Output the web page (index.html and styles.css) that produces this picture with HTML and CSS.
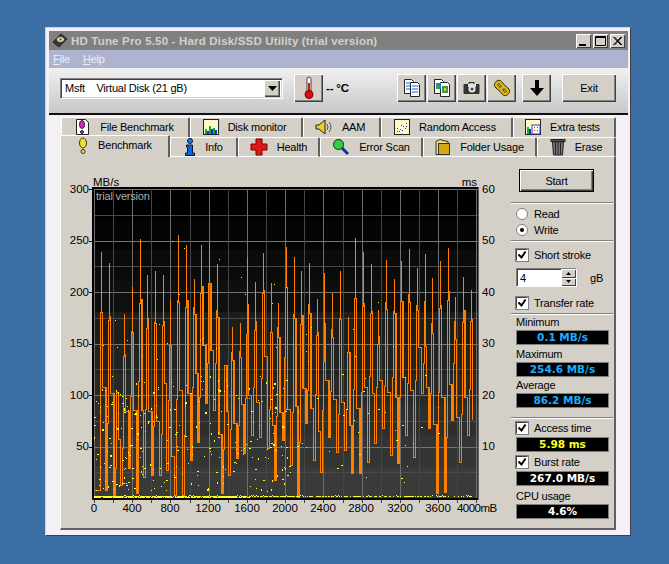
FILE: index.html
```html
<!DOCTYPE html>
<html lang="en">
<head>
<meta charset="utf-8">
<title>HD Tune Pro 5.50</title>
<link rel="stylesheet" href="styles.css">
</head>
<body>
<div class="win">
  <div class="titlebar">
    <svg class="ico-app" viewBox="0 0 16 16"><path d="M1 9 9 1l6 5-8 8z" fill="#3a3630" stroke="#222"/><ellipse cx="8.500" cy="6.500" rx="4" ry="3" fill="#e8d8a8" stroke="#333"/><circle cx="8.500" cy="6.500" r="1" fill="#333"/></svg>
    <span class="title-text">HD Tune Pro 5.50 - Hard Disk/SSD Utility (trial version)</span>
    <div class="wctrls">
      <span class="wbtn"><svg viewBox="0 0 15 14"><rect x="3" y="10" width="7" height="2" fill="#000"/></svg></span>
      <span class="wbtn"><svg viewBox="0 0 15 14"><path d="M2.500 2.500h10v9h-10zM2.500 3.500h10" fill="none" stroke="#000"/></svg></span>
      <span class="wbtn wbtn-close"><svg viewBox="0 0 15 14"><path d="M3.500 3 11 11M4.500 3 12 11M11 3 3.500 11M12 3 4.500 11" stroke="#000" fill="none"/></svg></span>
    </div>
  </div>
  <div class="menubar"><span class="menu"><u>F</u>ile</span><span class="menu"><u>H</u>elp</span></div>
  <div class="toolbar">
    <div class="combo"><span class="combo-text">Msft&nbsp;&nbsp;&nbsp;&nbsp;Virtual Disk (21 gB)</span><span class="combo-arrow"><svg viewBox="0 0 9 5"><path d="M0 0h9L4.500 5z" fill="#000"/></svg></span></div>
    <button class="tbtn therm"><svg viewBox="0 0 14 24" width="14" height="24"><rect x="5" y="1" width="4" height="16" rx="2" fill="#fff" stroke="#444"/><rect x="6" y="7" width="2" height="10" fill="#e01010"/><circle cx="7" cy="18.500" r="4" fill="#e01010" stroke="#600"/></svg></button>
    <span class="temp">-- °C</span>
    <button class="tbtn"><svg viewBox="0 0 20 20" width="20" height="20"><path d="M2.500 1.500h7l2 2v12h-9z" fill="#fff" stroke="#222"/><path d="M8.500 4.500h7l2 2v12h-9z" fill="#fff" stroke="#222"/><path d="M4 5h5M4 8h4M4 11h4M10 8h6M10 11h6M10 14h6" stroke="#0a6ae0"/></svg></button>
    <button class="tbtn"><svg viewBox="0 0 20 20" width="20" height="20"><path d="M2.500 1.500h7l2 2v12h-9z" fill="#fff" stroke="#222"/><path d="M8.500 4.500h7l2 2v12h-9z" fill="#fff" stroke="#222"/><rect x="4" y="5" width="5" height="6" fill="#2a7ae0"/><rect x="4" y="8" width="3" height="3" fill="#30b030"/><rect x="10" y="8" width="6" height="7" fill="#30a040"/><rect x="12" y="10" width="2" height="3" fill="#e8c020"/></svg></button>
    <button class="tbtn"><svg viewBox="0 0 18 14" width="18" height="14"><path d="M6 3V1.500h5V3" fill="none" stroke="#222"/><rect x="0.500" y="3" width="16" height="10" rx="1" fill="#333"/><rect x="5" y="3" width="8" height="3" fill="#ddd"/><circle cx="9" cy="8" r="3.500" fill="#e8e8e8"/><circle cx="9" cy="8" r="1.500" fill="#444"/></svg></button>
    <button class="tbtn"><svg viewBox="0 0 18 18" width="18" height="18"><g transform="rotate(-45 9 9)"><rect x="6.500" y="2" width="5" height="7" rx="2" fill="none" stroke="#3a3000" stroke-width="4"/><rect x="6.500" y="9" width="5" height="7" rx="2" fill="none" stroke="#3a3000" stroke-width="4"/><rect x="6.500" y="2" width="5" height="7" rx="2" fill="none" stroke="#d8b818" stroke-width="2.500"/><rect x="6.500" y="9" width="5" height="7" rx="2" fill="none" stroke="#d8b818" stroke-width="2.500"/></g></svg></button>
    <button class="tbtn b5"><svg viewBox="0 0 14 16" width="14" height="16"><path d="M5 0h4v8h5l-7 8-7-8h5z" fill="#000"/></svg></button>
    <button class="tbtn exit">Exit</button>
  </div>
  <div class="rule"></div>
  <div class="main">
    <div class="tabrow row1">
      <div class="tab t-file"><svg viewBox="0 0 18 18" width="18" height="18"><path d="M3.500 1.500h9l3 3v12h-12z" fill="#fff" stroke="#222"/><ellipse cx="9" cy="6.500" rx="2.500" ry="4" fill="#e020c0" stroke="#222"/><circle cx="9" cy="14" r="1.500" fill="#e020c0" stroke="#222"/></svg>File Benchmark</div>
      <div class="tab t-disk"><svg viewBox="0 0 16 16" width="16" height="16"><rect x="0.500" y="0.500" width="15" height="15" fill="#fff8c8" stroke="#222"/><path d="M2 15V10h2v5zM6 15V7h2v8zM10 15V9h2v6z" fill="#10b030"/><path d="M4 15v-3h2v3zM8 15v-5h2v5zM12 15v-4h2v4z" fill="#1030e0"/></svg>Disk monitor</div>
      <div class="tab t-aam"><svg viewBox="0 0 18 16" width="18" height="16"><path d="M1 6h3l6-5v14l-6-5H1z" fill="#f0d020" stroke="#222"/><path d="M12 5q2 3 0 6M14 3q4 5 0 10" fill="none" stroke="#555"/></svg>AAM</div>
      <div class="tab t-rand"><svg viewBox="0 0 16 16" width="16" height="16"><rect x="0.500" y="0.500" width="15" height="15" fill="#fff8c8" stroke="#222"/><path d="M3 12h1v1H3zM6 10h1v1H6zM9 7h1v1H9zM12 4h1v1h-1zM5 12h1v1H5zM11 9h1v1h-1z" fill="#e01010"/><path d="M3 9h1v1H3zM8 11h1v1H8zM12 7h1v1h-1zM7 6h1v1H7z" fill="#2030e0"/></svg>Random Access</div>
      <div class="tab t-extra"><svg viewBox="0 0 16 16" width="16" height="16"><rect x="0.500" y="0.500" width="15" height="15" fill="#fff8c8" stroke="#222"/><path d="M2 15V8h2v7z" fill="#10b030"/><path d="M4 15v-5h2v5z" fill="#1030e0"/><rect x="7" y="6" width="8" height="9" fill="#fff" stroke="#2040c0"/><path d="M9 8h1v1H9zM12 8h1v1h-1zM9 11h1v1H9zM12 11h1v1h-1z" fill="#e01010"/></svg>Extra tests</div>
    </div>
    <div class="tabrow row2">
      <div class="tab active t-bench"><svg viewBox="0 0 12 18" width="12" height="18"><ellipse cx="6" cy="6" rx="3.500" ry="5" fill="#f0e020" stroke="#333"/><circle cx="6" cy="14.500" r="2" fill="#f0e020" stroke="#333"/></svg><span class="bench-label">Benchmark</span></div>
      <div class="tab t-info"><svg viewBox="0 0 12 18" width="12" height="18"><circle cx="6" cy="3" r="2.500" fill="#1080f0" stroke="#113"/><path d="M2.500 7h6v8h2v2.500h-9V15h2v-6h-1z" fill="#1060e0" stroke="#113"/></svg>Info</div>
      <div class="tab t-health"><svg viewBox="0 0 18 18" width="18" height="18"><path d="M6 1h6v5h5v6h-5v5H6v-5H1V6h5z" fill="#e01818" stroke="#700"/></svg>Health</div>
      <div class="tab t-scan"><svg viewBox="0 0 18 18" width="18" height="18"><circle cx="6.500" cy="6.500" r="5" fill="#30d040" stroke="#222"/><path d="M10 10l6 6" stroke="#1030a0" stroke-width="3"/></svg>Error Scan</div>
      <div class="tab t-folder"><svg viewBox="0 0 16 18" width="16" height="18"><path d="M1 3.500l4-2 3 1 5 1v13H1z" fill="#f0e080" stroke="#333"/><rect x="3.500" y="5.500" width="11" height="11" fill="#d8a810" stroke="#333"/></svg>Folder Usage</div>
      <div class="tab t-erase"><svg viewBox="0 0 16 18" width="16" height="18"><rect x="1" y="1.500" width="14" height="2" fill="#555" stroke="#222"/><path d="M2.500 4h11l-1 13h-9z" fill="#777" stroke="#222"/><path d="M5.500 5v11M8 5v11M10.500 5v11" stroke="#222"/></svg>Erase</div>
    </div>
    <div class="panel">
      <svg id="chart" class="chart" viewBox="62 170 448 352" width="448" height="352">
        <g id="plot"></g>
        <text class="ax end" x="89" y="193">300</text><text class="ax end" x="89" y="244">250</text><text class="ax end" x="89" y="296">200</text><text class="ax end" x="89" y="347">150</text><text class="ax end" x="89" y="399">100</text><text class="ax end" x="89" y="450">50</text>
        <text class="ax" x="93" y="186">MB/s</text><text class="ax end" x="477" y="186">ms</text>
        <text class="ax" x="482" y="193">60</text><text class="ax" x="482" y="244">50</text><text class="ax" x="482" y="296">40</text><text class="ax" x="482" y="347">30</text><text class="ax" x="482" y="399">20</text><text class="ax" x="482" y="450">10</text>
        <text class="ax mid" x="94" y="512">0</text><text class="ax mid" x="132" y="512">400</text><text class="ax mid" x="170" y="512">800</text><text class="ax mid" x="208" y="512">1200</text><text class="ax mid" x="247" y="512">1600</text><text class="ax mid" x="285" y="512">2000</text><text class="ax mid" x="323" y="512">2400</text><text class="ax mid" x="361" y="512">2800</text><text class="ax mid" x="400" y="512">3200</text><text class="ax mid" x="438" y="512">3600</text><text class="ax tight" x="457" y="512">4000mB</text>
        <text class="trial" x="96" y="200">trial version</text>
      </svg>
      <div class="side">
        <button class="start">Start</button>
        <div class="sep s-a"></div>
        <label class="opt o-read"><span class="radio"></span>Read</label>
        <label class="opt"><span class="radio on"></span>Write</label>
        <div class="sep s-b"></div>
        <label class="opt o-short"><span class="check"><svg viewBox="0 0 10 10"><path d="M1.500 4.500l3 3 4-6" fill="none" stroke="#000" stroke-width="2"/></svg></span>Short stroke</label>
        <div class="spinrow"><div class="spin"><span class="spin-val">4</span><span class="spin-btns"><i><svg viewBox="0 0 5 3"><path d="M0 3h5L2.500 0z" fill="#000"/></svg></i><i><svg viewBox="0 0 5 3"><path d="M0 0h5L2.500 3z" fill="#000"/></svg></i></span></div><span class="unit">gB</span></div>
        <label class="opt o-rate"><span class="check"><svg viewBox="0 0 10 10"><path d="M1.500 4.500l3 3 4-6" fill="none" stroke="#000" stroke-width="2"/></svg></span>Transfer rate</label>
        <div class="sep s-c"></div>
        <div class="lbl l-min">Minimum</div>
        <div class="val blue">0.1 MB/s</div>
        <div class="lbl l-max">Maximum</div>
        <div class="val blue">254.6 MB/s</div>
        <div class="lbl">Average</div>
        <div class="val blue">86.2 MB/s</div>
        <div class="sep s-d"></div>
        <label class="opt o-access"><span class="check"><svg viewBox="0 0 10 10"><path d="M1.500 4.500l3 3 4-6" fill="none" stroke="#000" stroke-width="2"/></svg></span>Access time</label>
        <div class="val v-gap yellow">5.98 ms</div>
        <label class="opt o-burst"><span class="check"><svg viewBox="0 0 10 10"><path d="M1.500 4.500l3 3 4-6" fill="none" stroke="#000" stroke-width="2"/></svg></span>Burst rate</label>
        <div class="val v-gap white">267.0 MB/s</div>
        <div class="lbl l-cpu">CPU usage</div>
        <div class="val white">4.6%</div>
      </div>
    </div>
  </div>
</div>
<script src="chart.js"></script>
</body>
</html>
```
FILE: styles.css
```css
* { box-sizing: border-box; }
html, body { margin: 0; height: 564px; overflow: hidden; }
body {
  background: #3a6ea5;
  padding: 27px 0 0 45px;
  font: 11px "Liberation Sans", Arial, sans-serif;
  letter-spacing: -.2px;
  color: #000;
}
svg { display: block; }
.win {
  width: 586px;
  height: 509px;
  background: #f3f1f5;
  border: 1px solid;
  border-color: #d4d0c8 #404040 #404040 #d4d0c8;
  padding: 3px 2px 0 3px;
}
.titlebar {
  height: 19px;
  background: #808080;
  display: flex;
  align-items: center;
  padding-left: 3px;
  color: #d4d0c8;
  font-weight: bold;
  font-size: 11.5px;
}
.ico-app { width: 16px; height: 16px; margin-right: 3px; }
.title-text { letter-spacing: .18px; }
.wctrls { margin-left: auto; display: flex; gap: 2px; padding-right: 3px; }
.wbtn {
  width: 15px; height: 14px; background: #d4d0c8;
  box-shadow: inset 1px 1px #fff, inset -1px -1px #404040;
}
.menubar {
  height: 18px;
  background: #aeb4d0;
  display: flex;
  align-items: center;
  gap: 13px;
  padding-left: 4px;
  color: #eceef6;
}
.toolbar {
  height: 45px;
  background: linear-gradient(#f0f0f0, #c8c8c8);
  display: flex;
  align-items: center;
  padding: 0 0 5px 11px;
}
.combo {
  width: 223px; height: 21px; background: #fff;
  border: 1px solid; border-color: #808080 #fff #fff #808080;
  box-shadow: inset 1px 1px #404040, inset -1px -1px #d4d0c8;
  display: flex; align-items: center; padding: 0 2px 0 4px;
}
.combo-text { flex: 1; }
.combo-arrow {
  width: 16px; height: 17px; background: #d4d0c8;
  box-shadow: inset 1px 1px #fff, inset -1px -1px #404040, inset -2px -2px #808080;
  display: flex; align-items: center; justify-content: center;
}
.combo-arrow svg { width: 9px; height: 5px; }
.tbtn {
  width: 29px; height: 28px; padding: 0; margin: 0 1px 0 0;
  font: inherit; letter-spacing: inherit; color: #000; background: #d4d0c8;
  border: 0;
  box-shadow: inset 1px 1px #fff, inset -1px -1px #404040, inset -2px -2px #808080;
  display: flex; align-items: center; justify-content: center;
}
.therm { margin-left: 11px; margin-right: 0; }
.temp { width: 71px; margin-left: 3px; font-weight: bold; font-size: 11.5px; white-space: nowrap; }
.b5 { margin-left: 5px; }
.exit { width: 54px; margin-left: 10px; margin-right: 0; }
.rule { height: 2px; background: #101010; }
.main { padding-left: 11px; padding-top: 2px; width: 567px; }
.tabrow { display: flex; height: 20px; }
.tab {
  height: 20px; background: #d4d0c8;
  display: flex; align-items: center; justify-content: center; gap: 9px;
  border-top: 1px solid #fff; border-left: 1px solid #fff; border-right: 2px solid #606060;
  border-radius: 2px 2px 0 0;
  white-space: nowrap;
}
.row1 .tab { padding: 0 3px 1px 0; }
.row2 { position: relative; }
.row2 .tab { border-bottom: 1px solid #fff; }
.active {
  height: 22px; margin-top: -2px; border-bottom: 0 !important; position: relative; z-index: 1;
  align-items: flex-start; padding-top: 1px;
}
.bench-label { padding-top: 2px; }
.t-file { width: 129px; margin-left: 1px; } .t-disk { width: 113px; } .t-aam { width: 78px; } .t-rand { width: 132px; } .t-extra { width: 103px; }
.t-bench { width: 110px; } .t-info { width: 68px; } .t-health { width: 82px; } .t-scan { width: 103px; } .t-folder { width: 114px; } .t-erase { width: 79px; }
.panel {
  height: 373px; width: 556px;
  background: #d4d0c8;
  border-left: 1px solid #fff; border-right: 2px solid #606060; border-bottom: 2px solid #606060;
  display: flex;
  padding: 13px 0 0 1px;
  position: relative;
}
.chart { flex: none; }
.ax { font: 11.5px "Liberation Sans", Arial, sans-serif; letter-spacing: 0; fill: #000; }
.tight { letter-spacing: -.55px; }
.end { text-anchor: end; }
.mid { text-anchor: middle; }
.trial { font: 11px "Liberation Sans", Arial, sans-serif; fill: #aeaeae; }
.side { width: 102px; margin-left: 1px; display: flex; flex-direction: column; align-items: flex-start; }
.start {
  width: 75px; height: 23px; margin: -1px 0 0 8px; padding: 0; font: inherit; letter-spacing: inherit; background: #d4d0c8;
  border: 1px solid #000;
  box-shadow: inset 1px 1px #fff, inset -1px -1px #404040, inset -2px -2px #808080;
  flex: none;
}
.sep { width: 102px; height: 2px; border-top: 1px solid #808080; border-bottom: 1px solid #fff; flex: none; }
.s-a { margin-top: 10px; }
.s-b { margin-top: 2px; }
.s-c { margin-top: 2px; }
.s-d { margin-top: 9px; }
.opt { display: flex; align-items: center; gap: 6px; height: 16px; margin-left: 5px; flex: none; }
.o-read { margin-top: 2px; }
.o-short { margin-top: 5px; }
.o-rate { margin-top: 8px; }
.o-access { margin-top: 1px; }
.o-burst { margin-top: 2px; }
.radio {
  width: 12px; height: 12px; border-radius: 50%; background: #fff;
  border: 1px solid #808080; display: flex; align-items: center; justify-content: center; flex: none;
}
.radio.on::after { content: ""; width: 4px; height: 4px; border-radius: 50%; background: #000; }
.check {
  width: 12px; height: 12px; background: #fff; flex: none;
  border: 1px solid; border-color: #404040 #fff #fff #404040;
  box-shadow: 0 0 0 1px #808080;
  padding: 0;
}
.spinrow { display: flex; align-items: center; margin: 5px 0 0 5px; height: 19px; flex: none; }
.spin {
  width: 61px; height: 19px; background: #fff; display: flex; align-items: center;
  border: 1px solid; border-color: #808080 #fff #fff #808080;
  box-shadow: inset 1px 1px #404040;
  padding-left: 3px;
}
.spin-val { flex: 1; }
.spin-btns { width: 15px; height: 17px; display: flex; flex-direction: column; }
.spin-btns i {
  flex: 1; background: #d4d0c8; display: flex; align-items: center; justify-content: center;
  box-shadow: inset 1px 1px #fff, inset -1px -1px #404040;
}
.spin-btns svg { width: 5px; height: 3px; }
.unit { margin-left: 13px; }
.lbl { height: 16px; line-height: 16px; margin-left: 5px; flex: none; }
.l-min { margin-top: -1px; }
.l-max { margin-top: 1px; }
.val {
  width: 93px; height: 15px; margin-left: 5px; flex: none;
  background: #000; border: 1px solid #808080;
  font: bold 10.5px "DejaVu Sans", sans-serif; line-height: 13px; text-align: center; letter-spacing: 0;
}
.v-gap { margin-top: 1px; }
.blue { color: #18aeff; }
.yellow { color: #ffff20; }
.white { color: #fff; }
.l-cpu { margin-top: 2px; }
```
FILE: chart.js
```js
(function () {
  var NS = 'http://www.w3.org/2000/svg';
  var plot = document.getElementById('plot');
  function el(name, attrs) {
    var n = document.createElementNS(NS, name);
    for (var k in attrs) n.setAttribute(k, attrs[k]);
    plot.appendChild(n);
    return n;
  }
  // Background bands
  var bands = ['#000000', '#040604', '#0a0c0a', '#0e100e', '#1c1e1c', '#212321', '#272927', '#2d2f2d', '#333533', '#393b39'];
  var top = 188, h = 31;
  bands.forEach(function (c, i) {
    el('rect', { x: 93, y: top + i * h, width: 385, height: h + 1, fill: c });
  });
  function yOf(v) { return Math.round(498 - 1.03 * v) + 0.5; }
  function xOf(m) { return Math.round(94 + m * 0.0956) + 0.5; }
  function line(x1, y1, x2, y2, c, w) {
    el('line', { x1: x1, y1: y1, x2: x2, y2: y2, stroke: c, 'stroke-width': w || 1, 'shape-rendering': 'crispEdges' });
  }
  // Grid
  for (var v = 25; v <= 300; v += 25) {
    var major = v % 50 === 0;
    line(93, yOf(v), 478, yOf(v), major ? '#757575' : '#4a4a4a');
    if (major) line(89, yOf(v), 93, yOf(v), '#000');
  }
  for (var m = 0; m <= 4000; m += 200) {
    var maj = m % 400 === 0;
    line(xOf(m), 188, xOf(m), 499, maj ? '#6e6e6e' : '#464646');
    line(xOf(m), 499, xOf(m), 503, '#404040');
  }
  var seed = 4711;
  function rnd() { seed = (seed * 1664525 + 1013904223) % 4294967296; return seed / 4294967296; }
  // Spikes: zoomed x, peak y, left shoulder y, right shoulder y (upper crops)
  var s1 = [[33,82,262,262],[58,114,285,273],[82,500,500,500],[103,267,392,388],[127,186,317,322],[151,42,234,222],[172,150,310,278],[196,138,292,295],[220,150,300,288],[241,225,360,360],[265,30,226,230],[289,60,245,225],[313,162,247,267],[334,60,204,183],[358,52,174,174],[382,118,255,276],[406,420,420,420],[427,306,380,405],[451,294,378,396],[472,96,327,237],[496,171,315,288],[520,84,204,195],[544,174,320,320],[565,234,306,336]];
  var s2 = [[4,66,186,186],[28,96,267,279],[49,138,297,270],[73,114,237,264],[97,222,330,321],[118,144,408,294],[142,204,312,336],[166,138,279,282],[190,276,381,381],[211,39,219,219],[235,81,243,234],[259,117,264,258],[280,255,357,333],[304,105,231,252],[328,162,258,264],[349,108,228,228],[373,72,207,231],[397,129,240,255],[421,87,228,363],[442,159,294,324],[466,108,249,240],[490,69,225,198],[511,216,288,342],[535,156,291,255],[559,195,288,282]];
  // Valley reached after each spike (lower crops, y = 360 + z / 3)
  var v1 = [390,405,375,325,400,350,345,345,330,405,405,300,245,130,150,400,345,295,280,225,230,265,360,240];
  var v2 = [315,410,190,300,335,230,275,270,340,340,305,250,205,285,310,225,290,100,205,400,395,180,305,225,180];
  var pts = [];
  s1.forEach(function (s, i) { pts.push({ x: 90 + s[0] / 3, t: 225 + s[1] / 3, l: 225 + s[2] / 3, r: 225 + s[3] / 3, b: 360 + v1[i] / 3 }); });
  s2.forEach(function (s, i) { pts.push({ x: 285 + s[0] / 3, t: 225 + s[1] / 3, l: 225 + s[2] / 3, r: 225 + s[3] / 3, b: 360 + v2[i] / 3 }); });
  var R = Math.round;
  var d = 'M94.5 490 L' + (R(pts[0].x) - 0.5) + ' 490 ';
  var extra = '';
  function thick(x, y1, y2) {
    if (rnd() < 0.38) extra += 'M' + (x + 1) + ' ' + R(y1) + ' L' + (x + 1) + ' ' + R(y2) + ' ';
  }
  pts.forEach(function (p, i) {
    var x = R(p.x) + 0.5;
    var xl = x - 1, xr = x + 1;
    var next = pts[i + 1];
    d += 'L' + xl + ' ' + R(p.l) + ' L' + x + ' ' + R(p.l) + ' L' + x + ' ' + R(p.t) + ' L' + x + ' ' + R(p.r) + ' L' + xr + ' ' + R(p.r) + ' ';
    if (!next) { d += 'L' + xr + ' ' + R(p.b); return; }
    var nx = R(next.x) - 0.5;
    var gap = nx - xr;
    var a = R(xr + gap / 3), b = R(nx - gap / 3);
    var x1 = a + 0.5, x2 = b + 0.5;
    var mr = p.r + (p.b - p.r) * (0.4 + rnd() * 0.35);
    var ml = next.l + (p.b - next.l) * (0.4 + rnd() * 0.35);
    d += 'L' + xr + ' ' + R(mr) + ' L' + x1 + ' ' + R(mr) + ' L' + x1 + ' ' + R(p.b) + ' L' + x2 + ' ' + R(p.b) + ' L' + x2 + ' ' + R(ml) + ' L' + nx + ' ' + R(ml) + ' ';
    thick(xr, p.r, mr);
    thick(x1, mr, p.b);
    thick(x2 - 1, ml, p.b);
  });
  el('path', { d: d, fill: 'none', stroke: '#ff8000', 'stroke-width': 1, 'shape-rendering': 'crispEdges' });
  el('path', { d: extra, fill: 'none', stroke: '#ff8000', 'stroke-width': 1, 'shape-rendering': 'crispEdges' });
  // Access-time dots
  function dot(x, y, w, hh) { el('rect', { x: R(x), y: R(y), width: w || 1, height: hh || 1, fill: '#ffff20' }); }
  [[247,49],[283,70],[388,103],[454,157],[466,208],[76,286],[268,208],[547,235],[553,178],[208,298],[112,346],[82,367],[232,355],[331,346],[340,340],[379,370],[38,361],[157,394],[202,403],[559,367]].forEach(function (p) { dot(90 + p[0] / 3, 225 + p[1] / 3); });
  [[280,232],[79,307],[64,328],[205,313],[64,379],[211,394],[70,409],[325,364]].forEach(function (p) { dot(285 + p[0] / 3, 225 + p[1] / 3); });
  dot(186, 184); dot(220, 183);
  var i;
  for (i = 0; i < 250; i++) dot(94 + rnd() * 196, 375 + Math.pow(rnd(), 0.9) * 118, rnd() < 0.3 ? 2 : 1, rnd() < 0.25 ? 2 : 1);
  for (i = 0; i < 34; i++) dot(290 + rnd() * 150, 370 + rnd() * 122, rnd() < 0.25 ? 2 : 1);
  // Dense line on the floor
  for (var x = 94; x < 472; x++) {
    var keep = x < 300 ? 0.92 : 0.6;
    if (rnd() < keep) dot(x, 496 + (rnd() < 0.1 ? -1 : 0));
    if (x < 250 && rnd() < 0.85) dot(x, 497);
  }
  // Frame
  line(92, 188, 478, 188, '#000', 2);
  line(92.5, 187, 92.5, 500, '#000', 2);
  line(92, 499, 478, 499, '#000', 2);
  line(478.5, 187, 478.5, 500, '#606060', 1);
})();
```
